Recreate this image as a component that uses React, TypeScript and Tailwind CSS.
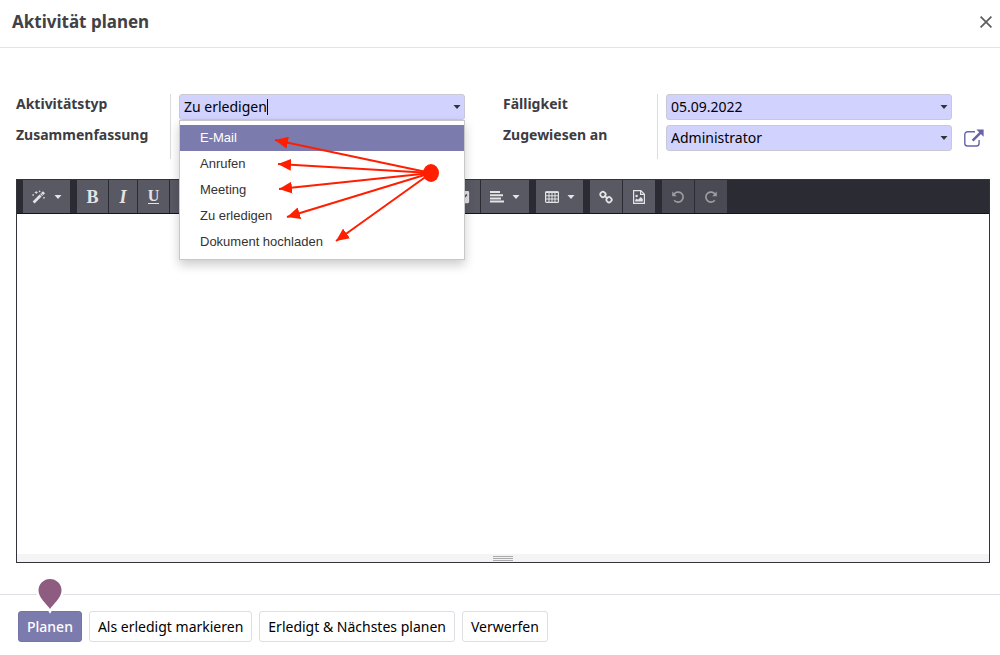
import { useState, type ReactNode } from "react";
import { FaEraser, FaListUl, FaListOl, FaCheckSquare, FaFont } from "react-icons/fa";
import clsx from "clsx";

const ACTIVITY_TYPES = ["E-Mail", "Anrufen", "Meeting", "Zu erledigen", "Dokument hochladen"];

// tips of the annotation arrows, relative to the dropdown
const ARROW_TIPS = [
  { x: 95, y: 19 },
  { x: 98, y: 43 },
  { x: 99, y: 68 },
  { x: 107, y: 96 },
  { x: 156, y: 120 },
];

function Caret({ className }: { className?: string }) {
  return (
    <svg viewBox="0 0 8 4" className={clsx("h-1 w-2 shrink-0", className)} fill="currentColor" aria-hidden>
      <path d="M.5 0h7L4 4z" />
    </svg>
  );
}

function MagicIcon() {
  return (
    <svg viewBox="0 0 14 14" className="size-3.5" fill="none" stroke="currentColor" aria-hidden>
      <path d="M1.6 12.6 8.6 5.6" strokeWidth="2.8" />
      <path d="M9.2 5 12 2.2" strokeWidth="2.8" />
      <path d="M9.4 3.4l1.6 1.6" stroke="#595964" strokeWidth=".7" />
      <path d="M4.2 1v3M2.7 2.5h3M1.2 4.2v1.6M.4 5h1.6M7.6 .6v1.6M6.8 1.4h1.6M12 7v1.6M11.2 7.8h1.6" strokeWidth=".8" />
    </svg>
  );
}

function AlignLeftIcon() {
  return (
    <svg viewBox="0 0 14 12" className="h-3 w-3.5" fill="currentColor" aria-hidden>
      <path d="M0 0h10v2H0zM0 3.2h13v2H0zM0 6.4h11v2H0zM0 9.6h14v2H0z" />
    </svg>
  );
}

function TableIcon() {
  return (
    <svg viewBox="0 0 14 12" className="h-3 w-3.5" fill="none" stroke="currentColor" aria-hidden>
      <rect x=".6" y=".8" width="12.8" height="10.6" rx="1" strokeWidth="1.2" />
      <path d="M.5 1.2h13" strokeWidth="1.6" />
      <path d="M.6 4.8h12.8M.6 8h12.8M4 1v10M7 1v10M10 1v10" />
    </svg>
  );
}

function LinkIcon() {
  return (
    <svg viewBox="0 0 14 14" className="size-3.5" fill="none" stroke="currentColor" strokeWidth="1.8" aria-hidden>
      <rect x="1.4" y="1.9" width="5" height="5" rx="2" transform="rotate(45 3.9 4.4)" />
      <rect x="7.5" y="7.200" width="5" height="5" rx="2" transform="rotate(45 10 9.700)" />
      <path d="M5.4 5.6l3.2 3" />
    </svg>
  );
}

function FileImageIcon() {
  return (
    <svg viewBox="0 0 12 14" className="h-3.5 w-3" fill="none" stroke="currentColor" aria-hidden>
      <path d="M.6.6h7.2l3.6 3.6v9.2H.6zM7.6.8v3.6h3.6" strokeWidth="1.2" />
      <circle cx="3.6" cy="6" r="1.2" fill="currentColor" stroke="none" />
      <path d="M2.2 11.6V10l1.4-1.4L5 9.8l2.8-2.8 2 2v2.6z" fill="currentColor" stroke="none" />
    </svg>
  );
}

function UndoIcon({ flip }: { flip?: boolean }) {
  return (
    <svg viewBox="0 0 12 12" className={clsx("size-3", flip && "-scale-x-100")} fill="none" stroke="currentColor" aria-hidden>
      <path d="M1.9 3.4A5 5 0 1 1 2.2 9.2" strokeWidth="1.6" />
      <path d="M.2.6v4.6h4.6z" fill="currentColor" stroke="none" />
    </svg>
  );
}

function ExternalLinkIcon() {
  return (
    <svg viewBox="0 0 20 18" className="h-[18px] w-5" fill="none" stroke="currentColor" aria-hidden>
      <path d="M11 2.7H3.6a2.8 2.8 0 0 0-2.8 2.8v8.7A2.8 2.8 0 0 0 3.6 17h8.7a2.8 2.8 0 0 0 2.8-2.8V11" strokeWidth="1.4" />
      <path d="M8.6 11.6 16.6 3.6" strokeWidth="2.6" />
      <path d="M12.4.6h7.2v7.2z" fill="currentColor" stroke="none" />
    </svg>
  );
}

interface ToolProps {
  label: string;
  width: string;
  menu?: boolean;
  disabled?: boolean;
  children: ReactNode;
}

function Tool({ label, width, menu, disabled, children }: ToolProps) {
  return (
    <button
      type="button"
      aria-label={label}
      disabled={disabled}
      className={clsx(
        "flex h-[33px] shrink-0 items-center justify-center gap-2 text-sm",
        disabled ? "bg-[#4a4a55] text-[#9d9da3]" : "bg-[#595964] text-[#e4e4e6]",
        width
      )}
    >
      {children}
      {menu && <Caret />}
    </button>
  );
}

function ToolGroup({ children }: { children: ReactNode }) {
  return <div className="flex gap-px">{children}</div>;
}

function EditorToolbar() {
  return (
    <div role="toolbar" aria-label="Formatierung" className="flex gap-[7px] overflow-hidden border-b border-[#15151b] bg-[#2b2b33] pl-1.5">
      <ToolGroup>
        <Tool label="Stil" width="w-[47px]" menu><MagicIcon /></Tool>
      </ToolGroup>
      <ToolGroup>
        <Tool label="Fett" width="w-[31px]">
          <span className="font-['Liberation_Serif',serif] text-lg font-bold">B</span>
        </Tool>
        <Tool label="Kursiv" width="w-7">
          <span className="font-['Liberation_Serif',serif] text-lg font-bold italic">I</span>
        </Tool>
        <Tool label="Unterstrichen" width="w-[31px]">
          <span className="border-b border-current font-['Liberation_Serif',serif] text-base leading-3.5 font-bold">U</span>
        </Tool>
        <Tool label="Formatierung entfernen" width="w-8"><FaEraser /></Tool>
      </ToolGroup>
      <ToolGroup>
        <Tool label="Schriftgröße" width="w-[52px]" menu><FaFont /></Tool>
      </ToolGroup>
      <ToolGroup>
        <Tool label="Schriftfarbe" width="w-9"><FaFont /></Tool>
        <Tool label="Hintergrundfarbe" width="w-9"><FaFont /></Tool>
      </ToolGroup>
      <ToolGroup>
        <Tool label="Liste" width="w-12"><FaListUl /></Tool>
        <Tool label="Nummerierte Liste" width="w-12"><FaListOl /></Tool>
        <Tool label="Checkliste" width="w-[34px]"><FaCheckSquare /></Tool>
        <Tool label="Ausrichtung" width="w-12" menu><AlignLeftIcon /></Tool>
      </ToolGroup>
      <ToolGroup>
        <Tool label="Tabelle" width="w-[47px]" menu><TableIcon /></Tool>
      </ToolGroup>
      <ToolGroup>
        <Tool label="Link" width="w-8"><LinkIcon /></Tool>
        <Tool label="Bild" width="w-8"><FileImageIcon /></Tool>
      </ToolGroup>
      <ToolGroup>
        <Tool label="Rückgängig" width="w-8" disabled><UndoIcon /></Tool>
        <Tool label="Wiederholen" width="w-8" disabled><UndoIcon flip /></Tool>
      </ToolGroup>
    </div>
  );
}

function ArrowOverlay() {
  return (
    <svg viewBox="0 0 286 140" className="pointer-events-none absolute top-0 left-0 h-[140px] w-[286px]" aria-hidden>
      <defs>
        <marker id="arrow-head" markerUnits="userSpaceOnUse" markerWidth="13" markerHeight="12" refX="13" refY="6" orient="auto">
          <path d="M13 6L0 0v12z" fill="#ff1e00" />
        </marker>
      </defs>
      {ARROW_TIPS.map((tip) => (
        <path
          key={tip.y}
          d={`M251 52L${tip.x} ${tip.y}`}
          stroke="#ff1e00"
          strokeWidth="2"
          markerEnd="url(#arrow-head)"
        />
      ))}
      <ellipse cx="251" cy="52" rx="8" ry="9" fill="#ff1e00" />
    </svg>
  );
}

const fieldBox = "flex h-[26px] items-center rounded-[3px] border border-[#c9c9d6] bg-[#d2d2ff] text-black";

function FieldLabel({ htmlFor, children }: { htmlFor: string; children: ReactNode }) {
  return (
    <label htmlFor={htmlFor} className="h-5 font-bold leading-5 text-[#3c3c42]">
      {children}
    </label>
  );
}

function FieldGroup({ labels, children }: { labels: ReactNode; children: ReactNode }) {
  return (
    <div className="flex">
      <div className="flex w-[154px] shrink-0 flex-col gap-[11px]">{labels}</div>
      <div className="flex min-w-0 flex-1 flex-col gap-[5px] border-l border-[#dcdce0] pb-2 pl-2">{children}</div>
    </div>
  );
}

function SecondaryButton({ children }: { children: ReactNode }) {
  return (
    <button type="button" className="h-[31px] rounded-[3px] border border-[#dedee3] bg-white px-2 text-black">
      {children}
    </button>
  );
}

export default function App() {
  const [type, setType] = useState("Zu erledigen");
  const [dueDate, setDueDate] = useState("05.09.2022");
  const [active, setActive] = useState(0);

  return (
    <div className="bg-white font-['Noto_Sans','Open_Sans',sans-serif] text-sm">
      <header className="flex h-12 items-center justify-between border-b border-[#e4e4e8] pb-1 pr-2 pl-3">
        <h1 className="text-[17px] leading-6 font-bold text-[#414146]">Aktivität planen</h1>
        <button type="button" aria-label="Schließen" className="text-[#5c5c5c]">
          <svg viewBox="0 0 12 12" className="size-3" stroke="currentColor" strokeWidth="1.7" aria-hidden>
            <path d="M.6.6l10.8 10.8M11.4.6L.6 11.4" />
          </svg>
        </button>
      </header>

      <main className="pt-[46px] pr-2.5 pb-[31px] pl-4">
        <div className="grid grid-cols-2">
          <FieldGroup
            labels={
              <>
                <FieldLabel htmlFor="type">Aktivitätstyp</FieldLabel>
                <FieldLabel htmlFor="summary">Zusammenfassung</FieldLabel>
              </>
            }
          >
            <div className="relative mr-[38px]">
              <div className={clsx(fieldBox, "pr-[3px] pl-1")}>
                <input
                  id="type"
                  role="combobox"
                  aria-expanded
                  aria-controls="type-options"
                  value={type}
                  onChange={(e) => setType(e.target.value)}
                  className="field-sizing-content bg-transparent caret-transparent outline-none"
                />
                <span className="h-4 w-px bg-black" aria-hidden />
                <Caret className="ml-auto text-[#333]" />
              </div>
              <div className="absolute inset-x-0 top-[26px] z-10 border border-[#c8c8c8] bg-white py-1 shadow-[0_5px_10px_rgba(0,0,0,0.2)]">
                <ul id="type-options" role="listbox" aria-label="Aktivitätstyp" className="font-['Liberation_Sans',sans-serif] text-[13px]">
                  {ACTIVITY_TYPES.map((name, i) => (
                    <li
                      key={name}
                      role="option"
                      aria-selected={i === active}
                      onMouseEnter={() => setActive(i)}
                      onClick={() => setType(name)}
                      className={clsx(
                        "flex h-[26px] cursor-pointer items-center pl-5",
                        i === active ? "bg-[#7c7bad] text-white" : "text-[#333]"
                      )}
                    >
                      {name}
                    </li>
                  ))}
                </ul>
                <ArrowOverlay />
              </div>
            </div>
            <div className={clsx(fieldBox, "mr-[38px] px-1")}>
              <input id="summary" className="w-full bg-transparent outline-none" />
            </div>
          </FieldGroup>

          <FieldGroup
            labels={
              <>
                <FieldLabel htmlFor="due">Fälligkeit</FieldLabel>
                <FieldLabel htmlFor="assigned">Zugewiesen an</FieldLabel>
              </>
            }
          >
            <div className={clsx(fieldBox, "mr-[38px] pr-[3px] pl-1")}>
              <input
                id="due"
                value={dueDate}
                onChange={(e) => setDueDate(e.target.value)}
                className="min-w-0 flex-1 bg-transparent outline-none"
              />
              <Caret className="text-[#333]" />
            </div>
            <div className="flex items-center">
              <div className={clsx(fieldBox, "min-w-0 flex-1 pr-[3px] pl-1")}>
                <select id="assigned" className="min-w-0 flex-1 appearance-none bg-transparent outline-none">
                  <option>Administrator</option>
                </select>
                <Caret className="text-[#333]" />
              </div>
              <button type="button" aria-label="Externer Link" className="w-[38px] shrink-0 pl-3 text-[#6663a8]">
                <ExternalLinkIcon />
              </button>
            </div>
          </FieldGroup>
        </div>

        <div className="mt-5 border border-[#33333a]">
          <EditorToolbar />
          <textarea aria-label="Notiz" className="block h-85 w-full resize-none bg-white p-2 outline-none" />
          <div className="flex h-2 flex-col items-center justify-center gap-px bg-[#f4f4f4]">
            <span className="h-px w-5 bg-[#a9a9a9]" />
            <span className="h-px w-5 bg-[#a9a9a9]" />
            <span className="h-px w-5 bg-[#a9a9a9]" />
          </div>
        </div>
      </main>

      <footer className="flex gap-[7px] border-t border-[#dedee8] px-[18px] pt-4 pb-3">
        <button type="button" className="relative h-[31px] rounded-[3px] border border-[#7573a8] bg-[#7c7bad] px-2 font-medium text-white">
          Planen
          <svg viewBox="0 0 30 38" className="absolute -top-9 left-1/2 h-[38px] w-[30px] -translate-x-1/2" aria-hidden>
            <path
              d="M15 33C12.5 29 3.5 22 3.5 14.5a11.5 11.5 0 0 1 23 0C26.5 22 17.5 29 15 33z"
              fill="#8e5b81"
              stroke="#fff"
              strokeWidth="5"
              paintOrder="stroke"
            />
          </svg>
        </button>
        <SecondaryButton>Als erledigt markieren</SecondaryButton>
        <SecondaryButton>Erledigt &amp; Nächstes planen</SecondaryButton>
        <SecondaryButton>Verwerfen</SecondaryButton>
      </footer>
    </div>
  );
}
